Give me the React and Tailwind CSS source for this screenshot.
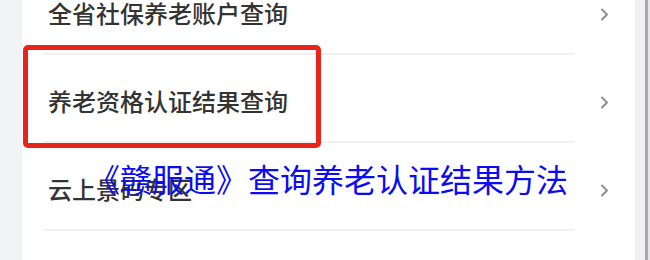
const rows = ['全省社保养老账户查询', '养老资格认证结果查询', '云上景码专区'];

const Chevron = () => (
  <svg width="9" height="13" viewBox="0 0 9 13" className="shrink-0">
    <polyline points="2,1.5 7,6.5 2,11.5" fill="none" stroke="#8e8e8e" strokeWidth="2" strokeLinecap="round" strokeLinejoin="round" />
  </svg>
);

export default function App() {
  return (
    <div
      className="relative w-[650px] h-[260px] overflow-hidden flex bg-[#f2f3f5]"
      style={{ fontFamily: '"Noto Sans CJK SC", "Noto Sans", sans-serif' }}
    >
      {/* left margin strip */}
      <div className="w-[22px] shrink-0 bg-[#f2f3f5]" />

      {/* list card */}
      <div className="w-[613px] shrink-0 bg-white">
        <div className="-mt-[33px] flex flex-col">
          {rows.map((label) => (
            <div key={label} className="flex items-center h-[88px]">
              <div className="ml-[21px] w-[531px] h-full flex items-center pt-[6px] pl-[5px] border-b-2 border-[#f1f1f1]">
                <span className="text-[24px] leading-none font-medium text-[#333333]">{label}</span>
              </div>
              <div className="ml-[26px] pt-[6px]">
                <Chevron />
              </div>
            </div>
          ))}
        </div>
      </div>

      {/* right edge */}
      <div className="w-[10px] shrink-0 bg-[#f1f1f3]" />
      <div className="w-[3px] shrink-0 bg-[#a9a9a9]" />
      <div className="flex-1 bg-[#e6e6e6]" />

      {/* red highlight box */}
      <div className="absolute left-[23px] top-[45px] w-[298px] h-[103px] border-[5px] border-[#e8251d] rounded-[5px]" />

      {/* caption overlay */}
      <div className="absolute left-[88px] top-[158px] text-[32px] leading-[40px] text-[#0b0bf5] whitespace-nowrap">
        《赣服通》查询养老认证结果方法
      </div>
    </div>
  );
}
